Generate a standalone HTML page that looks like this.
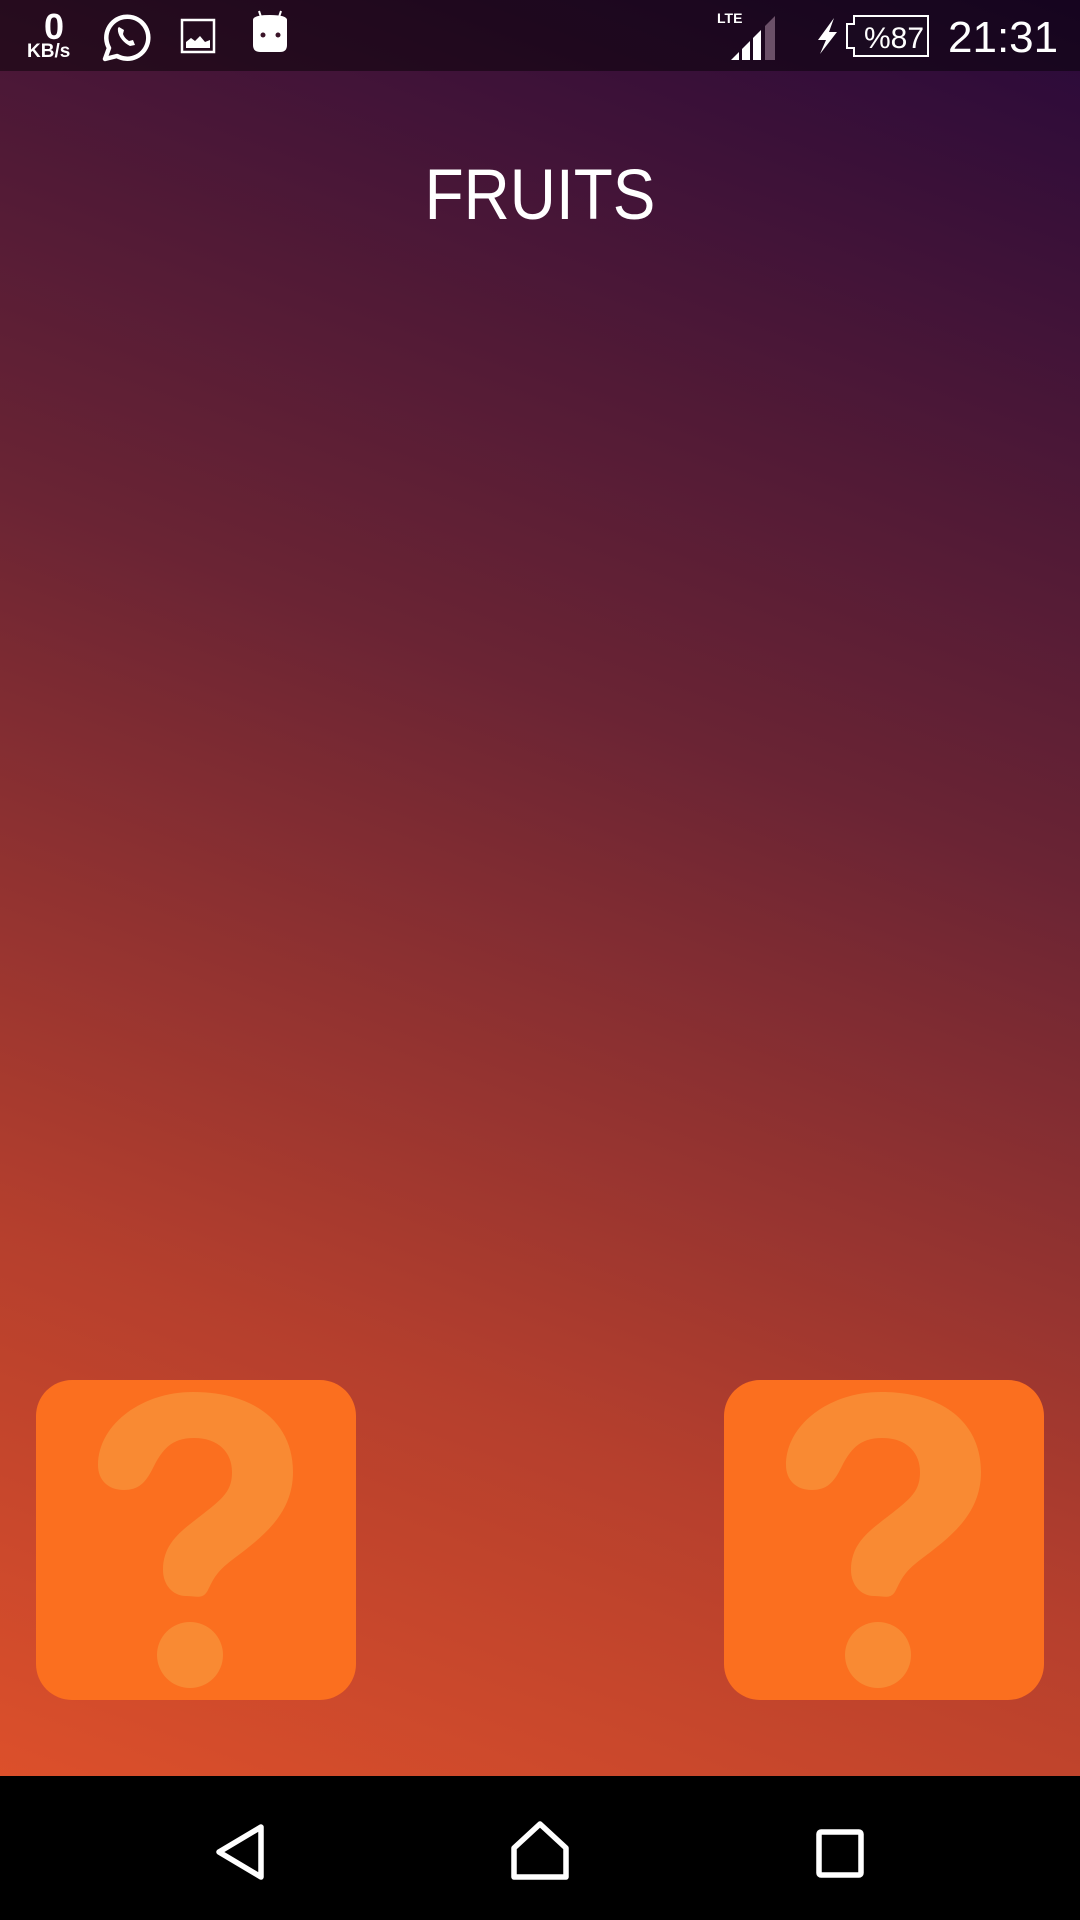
<!DOCTYPE html>
<html><head><meta charset="utf-8"><style>
*{margin:0;padding:0}
html,body{width:1080px;height:1920px;overflow:hidden}
body{position:relative;background:linear-gradient(20deg,#e6542a 0%,#b53f2d 30%,#6a2434 62%,#28093a 100%);font-family:"Liberation Sans",sans-serif;color:#fff}
.sb{position:absolute;left:0;top:0;width:1080px;height:71px;background:rgba(0,0,0,0.45)}
.nav{position:absolute;left:0;top:1776px;width:1080px;height:144px;background:#000}
.t{position:absolute;white-space:nowrap}
.title{position:absolute;left:0;width:1080px;top:151px;text-align:center;font-size:71px;line-height:90px;transform:scaleX(0.9)}
.card{position:absolute;top:1380px;width:320px;height:320px;border-radius:36px;background:#fb6f1f}
</style></head><body>
<div class="sb"></div>
<div class="t" style="left:44px;top:6px;font-size:36px;font-weight:bold">0</div>
<div class="t" style="left:27px;top:41px;font-size:19px;font-weight:bold">KB/s</div>
<svg style="position:absolute;left:0;top:0" width="1080" height="72">
 <path d="M105,59 L109,48 A21,21 0 1 1 117,56 Z" fill="none" stroke="#fff" stroke-width="4.5" stroke-linejoin="round"/>
 <path d="M118,28 C117,34 122,42 130,46 L135,45 L133,40 L129,41 C126,39 124,37 123,34 L124,30 L119,27 Z" fill="#fff"/>
 <rect x="182" y="20" width="32" height="32" fill="none" stroke="#fff" stroke-width="2.5"/>
 <path d="M186,48 L186,42 L191,38 L195,41 L200,36 L205,42 L210,40 L210,48 Z" fill="#fff"/>
 <path d="M253,20 Q253,15 270,15 Q287,15 287,20 L287,45 Q287,52 280,52 L260,52 Q253,52 253,45 Z" fill="#fff"/>
 <line x1="261" y1="17" x2="259" y2="11" stroke="#fff" stroke-width="2"/><line x1="279" y1="17" x2="281" y2="11" stroke="#fff" stroke-width="2"/>
 <circle cx="263" cy="35" r="2.5" fill="#3a1428"/><circle cx="278" cy="35" r="2.5" fill="#3a1428"/>
 <path d="M731,60 L739,52 L739,60 Z" fill="#fff"/>
 <path d="M742,60 L742,49 L750,41 L750,60 Z" fill="#fff"/>
 <path d="M753,60 L753,38 L761,30 L761,60 Z" fill="#fff"/>
 <path d="M765,60 L765,26 L775,16 L775,60 Z" fill="#6b5068"/>
 <text x="717" y="23" font-size="14" font-weight="bold" fill="#fff" font-family="Liberation Sans">LTE</text>
 <path d="M834,18 L818,40 L826,40 L820,54 L837,32 L829,32 Z" fill="#fff"/>
 <path d="M854,16 L928,16 L928,56 L854,56 L854,48 L847,48 L847,24 L854,24 Z" fill="#1a0a20" stroke="#fff" stroke-width="2"/>
 <text x="864" y="48" font-size="30" fill="#fff" font-family="Liberation Sans">%87</text>
 <text x="948" y="52" font-size="44" fill="#fff" font-family="Liberation Sans">21:31</text>
</svg>
<div class="title">FRUITS</div>
<div class="card" style="left:36px"><svg width="320" height="320"><path d="M62,85 C62,45 105,12 157,12 C218,12 257,42 257,92 C257,135 225,158 196,180 C180,192 177,200 172,210 C167,220 160,216 150,216 C137,216 127,205 127,190 C127,160 150,148 172,130 C190,116 196,108 196,92 C196,72 182,58 158,58 C135,58 126,70 117,88 C110,102 103,110 88,110 C72,110 62,100 62,85 Z" fill="#f98a33"/><circle cx="154" cy="275" r="33" fill="#f98a33"/></svg></div>
<div class="card" style="left:724px"><svg width="320" height="320"><path d="M62,85 C62,45 105,12 157,12 C218,12 257,42 257,92 C257,135 225,158 196,180 C180,192 177,200 172,210 C167,220 160,216 150,216 C137,216 127,205 127,190 C127,160 150,148 172,130 C190,116 196,108 196,92 C196,72 182,58 158,58 C135,58 126,70 117,88 C110,102 103,110 88,110 C72,110 62,100 62,85 Z" fill="#f98a33"/><circle cx="154" cy="275" r="33" fill="#f98a33"/></svg></div>
<div class="nav"></div>
<svg style="position:absolute;left:0;top:1776px" width="1080" height="144">
 <path d="M219,76 L261,51 L261,101 Z" fill="none" stroke="#fff" stroke-width="5.5" stroke-linejoin="round"/>
 <path d="M514,101 L514,72 L540,48 L566,72 L566,101 Z" fill="none" stroke="#fff" stroke-width="5.5" stroke-linejoin="round"/>
 <rect x="819" y="56" width="42" height="43" rx="2" fill="none" stroke="#fff" stroke-width="5.5"/>
</svg>
</body></html>
